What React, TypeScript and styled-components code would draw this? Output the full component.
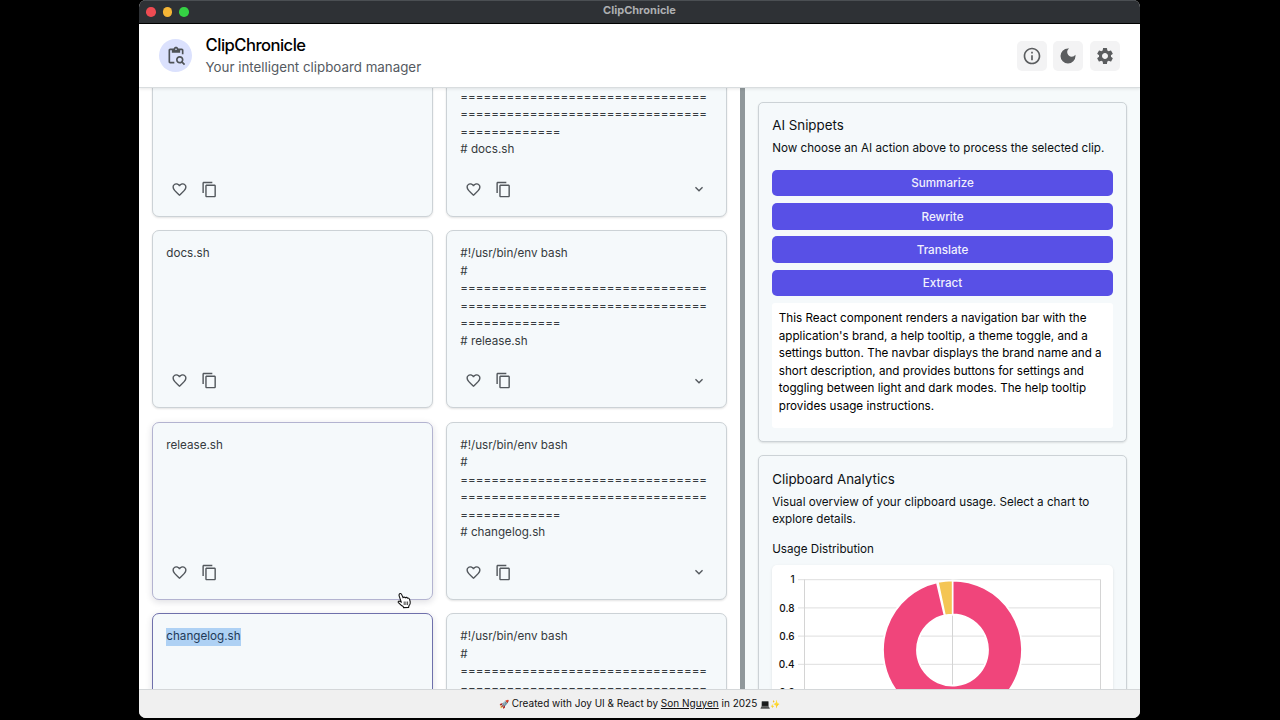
import React from "react";
import styled, { createGlobalStyle } from "styled-components";
import {
  MdContentCopy,
  MdContentPasteSearch,
  MdDarkMode,
  MdFavoriteBorder,
  MdInfoOutline,
  MdKeyboardArrowDown,
  MdSettings,
} from "react-icons/md";

const GlobalStyle = createGlobalStyle`
  * { box-sizing: border-box; }
  body {
    margin: 0;
    background: #000;
    font-family: Inter, "Liberation Sans", sans-serif;
    overflow: hidden;
  }
`;

const Desktop = styled.div`
  position: relative;
  width: 1280px;
  height: 720px;
  padding-left: 139px;
  background: #000;
  overflow: hidden;
`;

const Window = styled.div`
  display: flex;
  flex-direction: column;
  width: 1001px;
  height: 718px;
  border-radius: 7px;
  overflow: hidden;
  background: #fff;
`;

const TitleBar = styled.div`
  display: flex;
  align-items: center;
  flex: none;
  height: 24px;
  padding: 0 7px;
  background: #2e3135;
  border-top: 1px solid #4b4f53;
  border-bottom: 1px solid #000;
`;

const Lights = styled.div`
  display: flex;
  gap: 7px;
  flex: 1;
`;

const Light = styled.span<{ $color: string }>`
  width: 9.6px;
  height: 9.6px;
  border-radius: 50%;
  background: ${(p) => p.$color};
`;

const WindowTitle = styled.div`
  color: #adafb1;
  font-size: 11px;
  font-weight: 700;
  line-height: 14px;
  padding-bottom: 4px;
`;

const Spacer = styled.div`
  flex: 1;
`;

const Header = styled.header`
  position: relative;
  z-index: 1;
  display: flex;
  align-items: center;
  flex: none;
  height: 64px;
  padding: 0 20px;
  background: #fff;
  border-bottom: 1px solid #d9dddf;
  box-shadow: 0 1px 3px rgba(21, 21, 21, 0.1);
`;

const Logo = styled.div`
  display: grid;
  place-items: center;
  width: 33px;
  height: 33px;
  margin-right: 13.6px;
  border-radius: 50%;
  background: #dbe1fd;
  color: #4e5257;
  font-size: 20px;
`;

const Brand = styled.div`
  flex: 1;
`;

const BrandName = styled.div`
  color: #000;
  font-size: 16.6px;
  font-weight: 500;
  line-height: 22px;
  letter-spacing: -0.52px;
`;

const Tagline = styled.div`
  color: #555a5f;
  font-size: 13.34px;
  line-height: 21px;
  margin-top: 1px;
`;

const HeaderActions = styled.div`
  display: flex;
  gap: 6.7px;
`;

const HeaderButton = styled.button`
  display: grid;
  place-items: center;
  width: 30px;
  height: 30px;
  padding: 0;
  border: 0;
  border-radius: 5px;
  background: #f3f3f4;
  color: #5b5d5f;
  font-size: 20px;
`;

const Content = styled.main`
  display: flex;
  flex: 1;
  min-height: 0;
`;

const ClipPane = styled.section`
  width: 601px;
  padding: 0 13px;
  overflow: hidden;
`;

const ClipGrid = styled.div`
  display: grid;
  grid-template-columns: 281px 281px;
  grid-auto-rows: 178px;
  gap: 13.5px 13px;
  margin-top: -49.3px;
`;

type CardTone = "plain" | "hover" | "active";

const toneBorder: Record<CardTone, string> = {
  plain: "#ccd2d6",
  hover: "#b3b3d0",
  active: "#6f70ab",
};

const ClipCard = styled.article<{ $tone: CardTone }>`
  display: flex;
  flex-direction: column;
  padding: 14.1px 13.3px 13px;
  border: 1px solid ${(p) => toneBorder[p.$tone]};
  border-radius: 7px;
  background: #f5f9fb;
  box-shadow: ${(p) =>
    p.$tone === "plain"
      ? "0 1px 2px rgba(21, 21, 21, 0.12)"
      : "0 2px 7px rgba(21, 21, 50, 0.14)"};
`;

const ClipText = styled.div`
  flex: 1;
  color: #363b40;
  font-size: 11.67px;
  line-height: 17.5px;
  white-space: pre;
`;

const Selected = styled.span`
  display: inline-block;
  background: #aed1f4;
  color: #1f3a58;
`;

const CardActions = styled.div`
  display: flex;
  align-items: center;
  height: 27px;
  padding: 0 5.1px;
  color: #53585d;
`;

const ActionIcon = styled.span<{ $size: number; $push?: boolean }>`
  display: grid;
  place-items: center;
  width: 17px;
  margin-right: 13px;
  font-size: ${(p) => p.$size}px;
  ${(p) => p.$push && "margin-left: auto; margin-right: 0;"}
`;

const Splitter = styled.div`
  width: 5px;
  background: #90989b;
`;

const SidePane = styled.aside`
  flex: 1;
  display: flex;
  flex-direction: column;
  gap: 13.5px;
  padding: 13.5px 13px 0 13px;
  background: #f6fafb;
  overflow: hidden;
`;

const Panel = styled.section`
  flex: none;
  padding: 12.8px 13.2px;
  border: 1px solid #ccd2d6;
  border-radius: 5px;
  background: #f5f9fb;
  box-shadow: 0 1px 2px rgba(21, 21, 21, 0.12);
  color: #0d1114;
`;

const PanelTitle = styled.h2`
  margin: 0;
  font-size: 13.34px;
  font-weight: 400;
  line-height: 20px;
`;

const PanelText = styled.p`
  margin: 4.6px 0 0;
  font-size: 11.67px;
  line-height: 17.5px;
  white-space: pre;
`;

const ButtonStack = styled.div`
  display: flex;
  flex-direction: column;
  gap: 6.7px;
  margin-top: 12.4px;
`;

const AiButton = styled.button`
  height: 26.6px;
  padding: 0.6px 0 0;
  border: 0;
  border-radius: 5px;
  background: #5850e6;
  color: #f1f0fd;
  font-family: inherit;
  font-size: 11.67px;
  font-weight: 500;
`;

const Answer = styled.div`
  height: 125px;
  margin-top: 6.7px;
  padding: 7.4px 6.6px;
  border-radius: 3px;
  background: #fff;
  color: #000;
  font-size: 11.67px;
  line-height: 17.5px;
  white-space: pre;
`;

const ChartLabel = styled.h3`
  margin: 12.6px 0 6.2px;
  font-size: 11.67px;
  font-weight: 400;
  line-height: 17.5px;
`;

const ChartBox = styled.div`
  height: 200px;
  border-radius: 5px;
  background: #fff;
  box-shadow: 0 1px 3px rgba(21, 21, 21, 0.1);
`;

const Footer = styled.footer`
  display: flex;
  align-items: center;
  justify-content: center;
  flex: none;
  height: 29px;
  padding-bottom: 1px;
  border-top: 1px solid #d4d7d9;
  background: #f0f0f0;
  color: #111;
  font-size: 10px;
  line-height: 15px;
`;

const FooterText = styled.p`
  margin: 0;
  white-space: pre;
`;

const Emoji = styled.span<{ $dark?: boolean }>`
  font-size: 8.2px;
  ${(p) => p.$dark && "filter: brightness(0.35) saturate(0.3);"}
`;

const AuthorLink = styled.a`
  color: inherit;
  text-decoration: underline;
  text-underline-offset: 1px;
`;

const Pointer = styled.svg`
  position: absolute;
  left: 396.5px;
  top: 591.5px;
`;

const EQ = "=".repeat(32);

function ScriptHeader({ name }: { name: string }) {
  return <>{`#!/usr/bin/env bash\n#\n${EQ}\n${EQ}\n${"=".repeat(13)}\n# ${name}`}</>;
}

function Clip({
  children,
  tone = "plain",
  expandable = false,
}: {
  children?: React.ReactNode;
  tone?: CardTone;
  expandable?: boolean;
}) {
  return (
    <ClipCard $tone={tone}>
      <ClipText>{children}</ClipText>
      <CardActions>
        <ActionIcon $size={17}>
          <MdFavoriteBorder />
        </ActionIcon>
        <ActionIcon $size={17}>
          <MdContentCopy />
        </ActionIcon>
        {expandable && (
          <ActionIcon $size={16} $push>
            <MdKeyboardArrowDown />
          </ActionIcon>
        )}
      </CardActions>
    </ClipCard>
  );
}

const CX = 180.5;
const CY = 85;
const OUTER = 69.5;
const INNER = 35.5;

function point(r: number, deg: number) {
  const a = ((deg - 90) * Math.PI) / 180;
  return `${(CX + r * Math.cos(a)).toFixed(2)} ${(CY + r * Math.sin(a)).toFixed(2)}`;
}

function ring(from: number, to: number) {
  const large = to - from > 180 ? 1 : 0;
  return `M${point(OUTER, from)}A${OUTER} ${OUTER} 0 ${large} 1 ${point(OUTER, to)}L${point(
    INNER,
    to
  )}A${INNER} ${INNER} 0 ${large} 0 ${point(INNER, from)}Z`;
}

function UsageChart() {
  const ticks = ["1", "0.8", "0.6", "0.4", "0.2", "0"];
  return (
    <svg width="341" height="200" viewBox="0 0 341 200">
      {ticks.map((t, i) => {
        const y = 14.7 + i * 28.2;
        return (
          <g key={t}>
            <line x1="26" x2="328.5" y1={y} y2={y} stroke="#dedede" />
            <text
              x="22.6"
              y={y + 3.7}
              textAnchor="end"
              fontSize="10"
              fontWeight="500"
              fill="#111"
            >
              {t}
            </text>
          </g>
        );
      })}
      <path d="M32.5 14.5V156M180.5 14.5V156M328.5 14.5V156" stroke="#d4d4d4" />
      <path d={ring(0, 347)} fill="#f0457b" stroke="#fff" strokeWidth="1.8" />
      <path d={ring(348, 360)} fill="#f4c554" stroke="#fff" strokeWidth="1.4" />
    </svg>
  );
}

export default function App() {
  return (
    <Desktop>
      <GlobalStyle />
      <Window>
        <TitleBar>
          <Lights>
            <Light $color="#ee4b52" />
            <Light $color="#f5b536" />
            <Light $color="#35d144" />
          </Lights>
          <WindowTitle>ClipChronicle</WindowTitle>
          <Spacer />
        </TitleBar>
        <Header>
          <Logo>
            <MdContentPasteSearch />
          </Logo>
          <Brand>
            <BrandName>ClipChronicle</BrandName>
            <Tagline>Your intelligent clipboard manager</Tagline>
          </Brand>
          <HeaderActions>
            <HeaderButton aria-label="Help">
              <MdInfoOutline />
            </HeaderButton>
            <HeaderButton aria-label="Theme">
              <MdDarkMode />
            </HeaderButton>
            <HeaderButton aria-label="Settings">
              <MdSettings />
            </HeaderButton>
          </HeaderActions>
        </Header>
        <Content>
          <ClipPane>
            <ClipGrid>
              <Clip />
              <Clip expandable>
                <ScriptHeader name="docs.sh" />
              </Clip>
              <Clip>docs.sh</Clip>
              <Clip expandable>
                <ScriptHeader name="release.sh" />
              </Clip>
              <Clip tone="hover">release.sh</Clip>
              <Clip expandable>
                <ScriptHeader name="changelog.sh" />
              </Clip>
              <Clip tone="active">
                <Selected>changelog.sh</Selected>
              </Clip>
              <Clip expandable>{`#!/usr/bin/env bash\n#\n${EQ}\n${EQ}`}</Clip>
            </ClipGrid>
          </ClipPane>
          <Splitter />
          <SidePane>
            <Panel>
              <PanelTitle>AI Snippets</PanelTitle>
              <PanelText>Now choose an AI action above to process the selected clip.</PanelText>
              <ButtonStack>
                <AiButton>Summarize</AiButton>
                <AiButton>Rewrite</AiButton>
                <AiButton>Translate</AiButton>
                <AiButton>Extract</AiButton>
              </ButtonStack>
              <Answer>
                {`This React component renders a navigation bar with the
application's brand, a help tooltip, a theme toggle, and a
settings button. The navbar displays the brand name and a
short description, and provides buttons for settings and
toggling between light and dark modes. The help tooltip
provides usage instructions.`}
              </Answer>
            </Panel>
            <Panel>
              <PanelTitle>Clipboard Analytics</PanelTitle>
              <PanelText>
                {"Visual overview of your clipboard usage. Select a chart to\nexplore details."}
              </PanelText>
              <ChartLabel>Usage Distribution</ChartLabel>
              <ChartBox>
                <UsageChart />
              </ChartBox>
            </Panel>
          </SidePane>
        </Content>
        <Footer>
          <FooterText>
            <Emoji>🚀</Emoji>
            {" Created with Joy UI & React by "}
            <AuthorLink>Son Nguyen</AuthorLink>
            {" in 2025 "}
            <Emoji $dark>💻</Emoji>
            <Emoji>✨</Emoji>
          </FooterText>
        </Footer>
      </Window>
      <Pointer width="16" height="17" viewBox="0 0 16 17">
        <path
          d="M2.2 2.2C2.8 1.2 4.2 1.4 4.7 2.6L6 5.6C6.6 5 7.6 5 8.2 5.7C9 5.1 10 5.3 10.4 6.1C11.4 5.8 12.2 6.3 12.6 7.4L13.2 9.8C13.5 11.6 12.9 13 11.9 13.9L11.6 15.4L6.6 15.6L6.2 14.6C4.6 13.8 3 12.2 1.4 10.6C.8 9.8 1.6 8.8 2.6 9.2L4.2 9.9L2.3 4.4C2 3.5 1.9 2.8 2.2 2.2Z"
          fill="#fff"
          stroke="#111"
          strokeWidth="1.1"
        />
        <path d="M7.2 9.5V13M8.9 9.5V13M10.6 9.5V13" stroke="#333" strokeWidth=".9" />
      </Pointer>
    </Desktop>
  );
}
